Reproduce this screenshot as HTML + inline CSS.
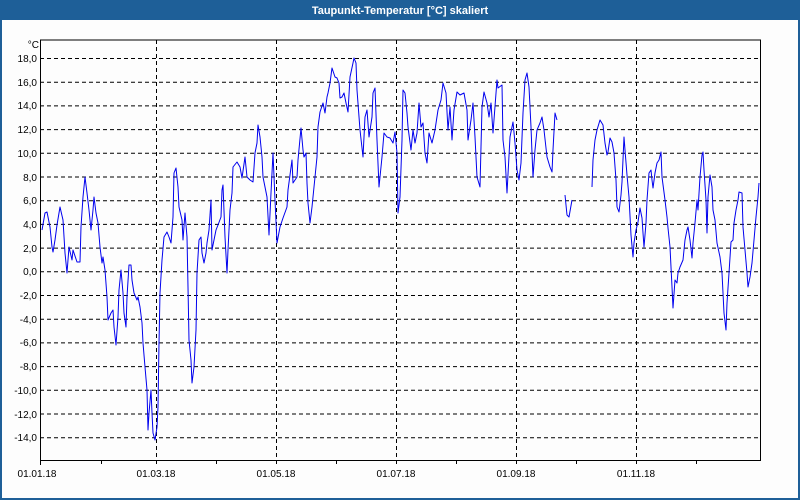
<!DOCTYPE html>
<html><head><meta charset="utf-8"><style>
html,body{margin:0;padding:0;background:#fff;}
body{width:800px;height:500px;overflow:hidden;position:relative;font-family:"Liberation Sans",sans-serif;}
</style></head><body>
<svg width="800" height="500" xmlns="http://www.w3.org/2000/svg" style="position:absolute;left:0;top:0">
<rect x="0" y="0" width="800" height="500" fill="#fdfdfd"/>
<rect x="0" y="0" width="800" height="20" fill="#1e5f98"/>
<rect x="0" y="0" width="2" height="500" fill="#1e5f98"/>
<rect x="798" y="0" width="2" height="500" fill="#1e5f98"/>
<rect x="0" y="498" width="800" height="2" fill="#1e5f98"/>
<text x="400" y="14" fill="#fff" font-size="11" font-weight="bold" text-anchor="middle">Taupunkt-Temperatur [°C] skaliert</text>
<g stroke="#000" stroke-width="1" stroke-dasharray="4,3" fill="none">
<path d="M40 58.5H760M40 82.2H760M40 105.9H760M40 129.6H760M40 153.3H760M40 177H760M40 200.7H760M40 224.4H760M40 248.1H760M40 271.8H760M40 295.5H760M40 319.2H760M40 342.9H760M40 366.6H760M40 390.3H760M40 414H760M40 437.7H760"/>
<path d="M156.5 40V465M276.5 40V465M396.5 40V465M516.5 40V465M636.5 40V465"/>
</g>
<g stroke="#000" stroke-width="1" fill="none">
<path d="M40.5 40V460.5H760.5V40H40"/>
<path d="M40.5 460V465M101.5 460V464M216.5 460V464M336.5 460V464M456.5 460V464M576.5 460V464M696.5 460V464"/>
</g>
<g font-size="10" fill="#000" text-anchor="end">
<text x="39" y="48">°C</text>
<text x="37" y="62">18,0</text><text x="37" y="86">16,0</text><text x="37" y="109">14,0</text><text x="37" y="133">12,0</text><text x="37" y="157">10,0</text><text x="37" y="181">8,0</text><text x="37" y="204">6,0</text><text x="37" y="228">4,0</text><text x="37" y="252">2,0</text><text x="37" y="275">0,0</text><text x="37" y="299">-2,0</text><text x="37" y="323">-4,0</text><text x="37" y="346">-6,0</text><text x="37" y="370">-8,0</text><text x="37" y="394">-10,0</text><text x="37" y="418">-12,0</text><text x="37" y="441">-14,0</text>
</g>
<g font-size="10" fill="#000" text-anchor="middle">
<text x="37" y="477">01.01.18</text><text x="156" y="477">01.03.18</text><text x="276" y="477">01.05.18</text><text x="396" y="477">01.07.18</text><text x="516" y="477">01.09.18</text><text x="636" y="477">01.11.18</text>
</g>
<g stroke="#0000ee" stroke-width="1" fill="none" stroke-linejoin="round">
<polyline points="42,230 45,213 47,212 50,227 52,247 53,252 55,240 57,225 60,207 63,220 65,253 67,273 69,247 72,260 73,250 77,262 80,262 81,227 83,197 85,177 87,193 89,210 91,230 93,210 94,197 96,213 98,223 100,247 102,263 103,257 105,270 107,297 108,320 111,313 113,310 114,327 116,345 118,317 119,290 121,270 123,293 124,313 126,327 127,297 129,265 131,265 132,280 134,293 137,300 138,297 140,307 142,323 143,343 145,367 147,390 148,430 149,413 151,390 152,413 153,433 155,440 157,427 158,407 159,343 160,293 162,260 164,237 167,232 169,237 171,243 173,217 174,173 176,168 178,187 179,207 182,220 183,240 185,213 187,237 188,287 189,340 191,360 192,383 194,367 196,330 197,273 199,240 201,237 202,253 204,263 206,253 207,243 209,230 211,200 212,250 214,240 216,230 218,225 221,217 222,190 223,185 225,237 227,273 228,250 230,210 232,193 233,167 237,162 240,167 242,178 245,157 247,177 250,180 253,182 255,153 257,143 258,125 260,137 262,157 263,177 267,197 269,235 271,193 273,153 275,200 277,243 280,227 283,218 287,207 288,190 292,160 293,183 297,177 298,160 301,128 303,150 304,157 306,153 307,183 308,203 310,223 312,207 315,177 317,157 318,127 320,112 323,103 325,113 327,97 328,93 330,83 332,68 335,77 337,78 339,83 340,98 342,97 344,93 346,103 348,112 350,77 353,63 354,58 356,63 357,90 360,130 363,157 365,117 367,110 369,137 372,117 373,93 375,88 377,140 379,187 382,157 384,133 387,137 390,138 393,143 395,132 397,153 398,213 400,197 402,140 403,90 405,93 407,113 408,127 411,150 413,130 415,143 417,133 419,103 421,127 423,123 425,153 427,163 429,133 432,143 435,130 438,110 441,100 443,83 446,93 448,130 450,107 452,140 454,110 457,92 460,95 464,93 467,110 468,140 471,120 473,103 475,137 477,177 480,187 482,107 484,92 487,103 489,117 491,103 493,133 497,80 498,88 502,85 503,140 505,157 507,193 510,137 513,122 515,143 517,170 519,180 521,163 523,113 525,80 527,73 529,87 531,127 532,153 533,177 535,150 537,130 540,123 542,117 544,130 547,157 550,167 552,172 553,150 555,113 557,120"/>
<polyline points="565,195 567,215 569,217 572,200"/>
<polyline points="592,187 593,160 595,140 597,130 600,120 603,125 605,143 607,155 608,152 610,138 612,142 614,153 616,180 617,207 619,212 621,195 622,182 624,137 625,150 627,175 629,197 631,235 633,257 634,243 636,230 638,222 640,208 642,218 643,233 644,247 646,223 647,200 649,173 651,170 652,180 653,188 655,173 657,163 659,160 661,152 662,177 665,200 667,217 668,228 670,247 671,267 672,287 673,308 675,280 677,283 678,273 680,267 683,260 685,240 687,230 688,227 690,240 692,258 693,243 695,223 697,200 698,210 700,177 702,155 703,152 704,170 706,200 707,233 708,197 710,175 712,187 713,210 715,220 717,243 720,257 722,273 723,293 724,313 726,330 727,303 729,273 731,242 733,240 734,223 736,210 738,200 739,192 742,193 743,227 745,250 747,273 748,287 750,277 752,263 754,240 756,217 758,197 759,183"/>
</g>
</svg>
</body></html>
